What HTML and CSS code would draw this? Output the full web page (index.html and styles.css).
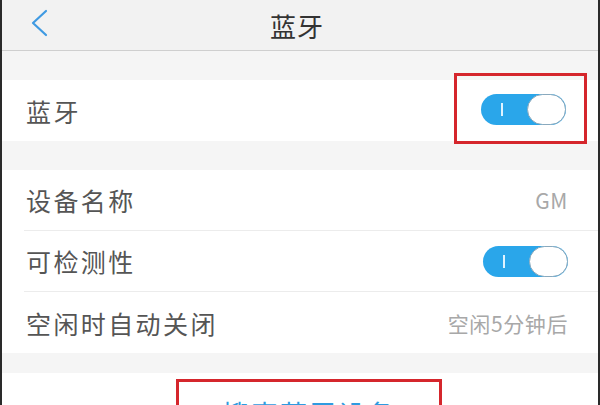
FILE: index.html
```html
<!DOCTYPE html>
<html>
<head>
<meta charset="utf-8">
<link rel="stylesheet" href="styles.css">
</head>
<body>
<div class="screen">
	<div class="topbar">
		<a class="back" href="#">
			<svg width="20" height="28" viewBox="0 0 20 28"><path d="M17 2 L4 14 L17 26" fill="none" stroke="#3f9ae2" stroke-width="2.2" stroke-linecap="round" stroke-linejoin="round"/></svg>
		</a>
		<div class="title">蓝牙</div>
	</div>

	<div class="gap"></div>
	<div class="group">
		<div class="row">
			<span class="label">蓝牙</span>
			<span class="mark big"><span class="switch on"><i></i></span></span>
		</div>
	</div>

	<div class="gap"></div>
	<div class="group">
		<div class="row line">
			<span class="label">设备名称</span>
			<span class="value">GM</span>
		</div>
		<div class="row line">
			<span class="label">可检测性</span>
			<span class="switch on"><i></i></span>
		</div>
		<div class="row">
			<span class="label">空闲时自动关闭</span>
			<span class="value">空闲5分钟后</span>
		</div>
	</div>

	<div class="gap short"></div>
	<div class="search">
		<a class="mark btn" href="#">搜索蓝牙设备</a>
	</div>
</div>
</body>
</html>
```

FILE: styles.css
```css
body {
	margin: 0;
	font-family: "Noto Sans CJK SC", "Liberation Sans", sans-serif;
	background: #fff;
}
.screen {
	height: 405px;
	overflow: hidden;
	border-left: 2px solid #2a2a2a;
	border-right: 2px solid #2a2a2a;
	background: #f4f4f4;
}
.topbar {
	position: relative;
	height: 50px;
	display: flex;
	align-items: center;
	justify-content: center;
	background: #f2f2f2;
	border-bottom: 1px solid #cfcfcf;
}
.topbar .back {
	position: absolute;
	left: 27px;
	top: 9px;
}
.title {
	font-size: 26px;
	color: #333;
	letter-spacing: 1px;
	padding-right: 6px;
}
.gap {
	height: 29px;
	background: #f5f5f5;
}
.gap.short {
	height: 20px;
}
.group {
	background: #fff;
	padding-left: 22px;
}
.row {
	height: 61px;
	display: flex;
	align-items: center;
	justify-content: space-between;
	padding-right: 30px;
}
.row.line {
	border-bottom: 1px solid #ececec;
	height: 60px;
}
.label {
	font-size: 25px;
	letter-spacing: 2.4px;
	color: #555;
	padding-left: 2px;
}
.value {
	font-size: 21px;
	color: #a8a8a8;
	letter-spacing: 0.6px;
}
.switch {
	position: relative;
	display: inline-block;
	width: 85px;
	height: 31px;
	border-radius: 16px;
	background: #2aa6ea;
	box-sizing: border-box;
}
.switch:before {
	content: "";
	position: absolute;
	left: 20px;
	top: 9px;
	width: 2px;
	height: 13px;
	background: #dff3ff;
}
.switch i {
	position: absolute;
	right: 0;
	top: 0;
	width: 39px;
	height: 31px;
	border-radius: 16px;
	background: #fff;
	border: 1px solid #8aa9bd;
	box-sizing: border-box;
}
.mark {
	border: 3px solid #d5262c;
}
.mark.big {
	position: relative;
	right: -19px;
	padding: 18px 18px 11px 24px;
	margin-top: -4px;
}
.search {
	background: #fff;
	height: 60px;
	display: flex;
	padding: 6px 0 0 174px;
}
.btn {
	display: block;
	width: 266px;
	height: 60px;
	text-align: center;
	font-size: 27px;
	color: #2f9be0;
	text-decoration: none;
	padding-top: 12px;
	box-sizing: border-box;
	letter-spacing: 2px;
}
```
